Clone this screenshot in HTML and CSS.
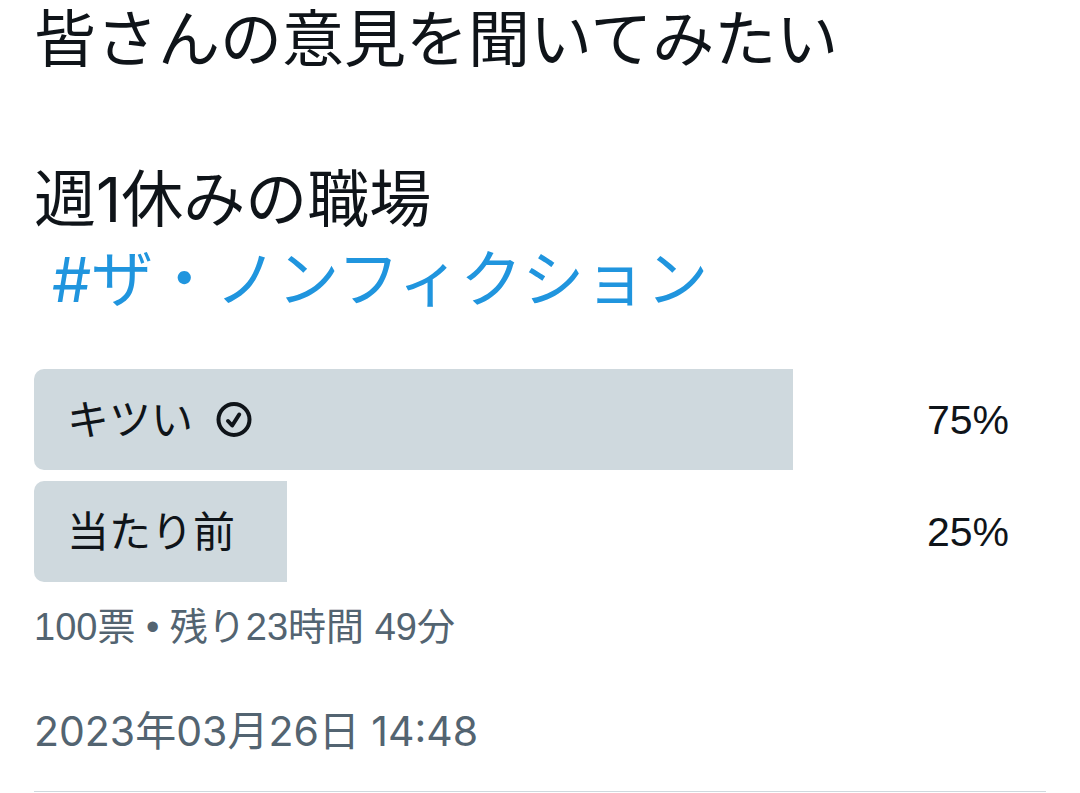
FILE: index.html
```html
<!DOCTYPE html>
<html lang="ja">
<head>
<meta charset="utf-8">
<meta name="viewport" content="width=device-width, initial-scale=1">
<title>アンケート</title>
<link rel="stylesheet" href="styles.css">
</head>
<body>
<article class="post">
  <p class="post-text">皆さんの意見を聞いてみたい</p>
  <p class="post-text post-text-second">週1休みの職場<br><a class="hashtag" href="#tag">#ザ・ノンフィクション</a></p>
  <ul class="poll">
    <li class="option">
      <div class="bar" style="width: 75%"></div>
      <span class="label">キツい
        <svg class="check" viewBox="0 0 36 36" role="img" aria-label="投票済み"><circle cx="18" cy="17.5" r="15.5"/><path d="M12 19l4.2 4.5 7-11"/></svg>
      </span>
      <span class="percent">75%</span>
    </li>
    <li class="option">
      <div class="bar" style="width: 25%"></div>
      <span class="label">当たり前</span>
      <span class="percent">25%</span>
    </li>
  </ul>
  <p class="votes">100票 • 残り23時間 49分</p>
  <time class="date" datetime="2023-03-26T14:48">2023年03月26日 14:48</time>
</article>
</body>
</html>
```
FILE: styles.css
```css
* {
  box-sizing: border-box;
}

body {
  margin: 0;
  background: #fff;
  color: #0f1419;
  font-family: Inter, "Noto Sans CJK JP", sans-serif;
}

.post {
  margin: 0 34px;
  border-bottom: 1px solid #cfd9de;
}

.post-text {
  margin: 0;
  font-size: 62px;
  line-height: 80px;
}

.post-text-second {
  padding-top: 80px;
}

.hashtag {
  margin-left: 18px;
  color: #2095de;
  text-decoration: none;
}

.poll {
  display: grid;
  gap: 11px;
  margin: 49px 0 0;
  padding: 0;
  list-style: none;
}

.option {
  position: relative;
  display: flex;
  align-items: center;
  justify-content: space-between;
  height: 101px;
  padding: 0 37px 0 33px;
  font-size: 42px;
  line-height: 60px;
}

.bar {
  position: absolute;
  inset: 0 auto 0 0;
  border-radius: 10px 0 0 10px;
  background: #cfd9de;
}

.label,
.percent {
  position: relative;
}

.label {
  display: flex;
  align-items: center;
  gap: 23px;
}

.percent {
  font-family: "Liberation Sans", Arial, sans-serif;
  font-size: 41px;
}

.check {
  width: 36px;
  height: 36px;
  fill: none;
  stroke: #0f1419;
  stroke-width: 4;
  stroke-linecap: round;
  stroke-linejoin: round;
}

.votes {
  margin: 20px 0 0;
  color: #536471;
  font-family: "Liberation Sans", "Noto Sans CJK JP", sans-serif;
  font-size: 38px;
  line-height: 50px;
}

.date {
  display: block;
  padding: 49px 0 30px;
  color: #536471;
  font-size: 41px;
  line-height: 60px;
}
```
